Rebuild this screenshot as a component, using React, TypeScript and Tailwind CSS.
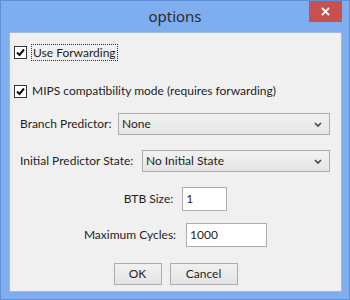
const font = "font-['Lato','Liberation_Sans',sans-serif]";

function CheckBox({ checked }: { checked: boolean }) {
  return (
    <span className="flex h-[13px] w-[13px] items-center justify-center border border-[#333] bg-white">
      {checked && (
        <svg width="9" height="9" viewBox="0 0 9 9">
          <path d="M1 4.5 L3.5 7 L8 1.5" fill="none" stroke="#111" strokeWidth="2" />
        </svg>
      )}
    </span>
  );
}

function Combo({ value, width }: { value: string; width: string }) {
  return (
    <div
      className={`flex h-[22px] ${width} items-center justify-between border border-[#acacac] bg-gradient-to-b from-[#f2f2f2] to-[#e5e5e5] pl-[3px] pr-[7px]`}
    >
      <span>{value}</span>
      <svg width="8" height="5" viewBox="0 0 8 5">
        <path d="M1 1 L4 4 L7 1" fill="none" stroke="#444" strokeWidth="1.6" />
      </svg>
    </div>
  );
}

function Field({ value, width }: { value: string; width: string }) {
  return (
    <div className={`flex h-[24px] ${width} items-center border border-[#abadb3] bg-white pl-[3px]`}>
      {value}
    </div>
  );
}

function Button({ label, width }: { label: string; width: string }) {
  return (
    <div
      className={`flex h-[22px] ${width} items-center justify-center border border-[#acacac] bg-gradient-to-b from-[#f0f0f0] to-[#e5e5e5]`}
    >
      {label}
    </div>
  );
}

export default function App() {
  return (
    <div className={`flex h-[300px] w-[350px] flex-col border border-[#5f8fd6] bg-[#7eaef0] ${font}`}>
      {/* title bar */}
      <div className="relative flex h-[31px] shrink-0 items-center justify-center">
        <span className="font-['Noto_Sans',sans-serif] text-[15px] text-[#2b2b2b]">options</span>
        <div className="absolute right-[7px] top-0 flex h-[21px] w-[33px] items-center justify-center bg-[#c75050]">
          <svg width="9" height="9" viewBox="0 0 9 9">
            <path d="M1 1 L8 8 M8 1 L1 8" stroke="white" strokeWidth="1.8" />
          </svg>
        </div>
      </div>

      {/* body */}
      <div className="mb-[7px] ml-[8px] mr-[7px] flex flex-1 flex-col border border-[#a5b7d2] bg-[#f0f0f0] pt-[10px] text-[12px] text-[#1e1e1e]">
        <div className="flex h-[18px] items-center gap-[4px] pl-[4px]">
          <CheckBox checked />
          <span className="border border-dotted border-[#333] px-[1px] leading-[15px]">Use Forwarding</span>
        </div>

        <div className="mt-[21px] flex h-[18px] items-center gap-[5px] pl-[4px]">
          <CheckBox checked />
          <span>MIPS compatibility mode (requires forwarding)</span>
        </div>

        <div className="mt-[13px] flex items-center pl-[10px]">
          <span className="w-[98px]">Branch Predictor:</span>
          <Combo value="None" width="w-[212px]" />
        </div>

        <div className="mt-[15px] flex items-center pl-[10px]">
          <span className="w-[122px]">Initial Predictor State:</span>
          <Combo value="No Initial State" width="w-[188px]" />
        </div>

        <div className="mt-[15px] flex items-center justify-center gap-[9px]">
          <span>BTB Size:</span>
          <Field value="1" width="w-[45px]" />
        </div>

        <div className="mt-[12px] flex items-center justify-center gap-[10px]">
          <span>Maximum Cycles:</span>
          <Field value="1000" width="w-[81px]" />
        </div>

        <div className="mt-[16px] flex items-center justify-center gap-[8px]">
          <Button label="OK" width="w-[48px]" />
          <Button label="Cancel" width="w-[68px]" />
        </div>
      </div>
    </div>
  );
}
